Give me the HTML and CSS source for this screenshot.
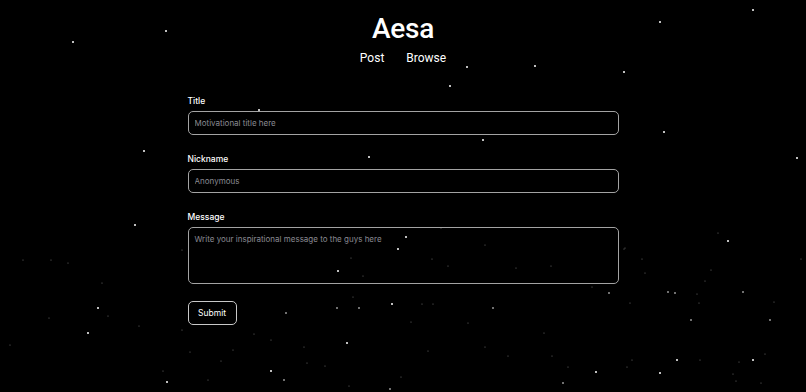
FILE: index.html
```html
<!DOCTYPE html>
<html lang="en">
<head>
    <meta charset="UTF-8" />
    <meta name="viewport" content="width=device-width, initial-scale=1.0" />
    <title>Aesa</title>
    <link rel="stylesheet" href="styles.css">
</head>
<body>
    <!-- Star field -->
    <svg class="stars" width="806" height="392" viewBox="0 0 806 392">
        <g class="bright">
            <circle cx="73" cy="42" r="1" />
            <circle cx="166" cy="31" r="1" />
            <circle cx="144" cy="151" r="1" />
            <circle cx="259" cy="110" r="1" />
            <circle cx="753" cy="10" r="1" />
            <circle cx="660" cy="22" r="1" />
            <circle cx="624" cy="72" r="1" />
            <circle cx="664" cy="132" r="1" />
            <circle cx="797" cy="158" r="1" />
            <circle cx="535" cy="66" r="1" />
            <circle cx="467" cy="67" r="1" />
            <circle cx="450" cy="86" r="1" />
            <circle cx="483" cy="140" r="1" />
            <circle cx="369" cy="157" r="1" />
            <circle cx="135" cy="225" r="1" />
            <circle cx="98" cy="308" r="1" />
            <circle cx="88" cy="333" r="1" />
            <circle cx="167" cy="382" r="1" />
            <circle cx="728" cy="241" r="1" />
            <circle cx="753" cy="360" r="1" />
            <circle cx="660" cy="373" r="1" />
            <circle cx="743" cy="292" r="0.8" />
            <circle cx="675" cy="293" r="0.8" />
            <circle cx="770" cy="320" r="0.8" />
            <circle cx="392" cy="304" r="1" />
            <circle cx="337" cy="308" r="0.8" />
            <circle cx="286" cy="313" r="0.8" />
            <circle cx="493" cy="308" r="0.8" />
            <circle cx="347" cy="343" r="1" />
            <circle cx="271" cy="371" r="1" />
            <circle cx="284" cy="380" r="0.8" />
            <circle cx="596" cy="372" r="1" />
            <circle cx="563" cy="383" r="0.8" />
            <circle cx="668" cy="292" r="0.8" />
            <circle cx="609" cy="293" r="0.8" />
            <circle cx="691" cy="320" r="0.8" />
            <circle cx="677" cy="360" r="1" />
            <circle cx="390" cy="389" r="0.8" />
            <circle cx="406" cy="237" r="1" />
            <circle cx="398" cy="249" r="1" />
            <circle cx="338" cy="271" r="1" />
            <circle cx="359" cy="308" r="0.8" />
        </g>
        <g class="dim">
            <circle cx="23" cy="260" r="0.6" />
            <circle cx="51" cy="260" r="0.6" />
            <circle cx="68" cy="263" r="0.6" />
            <circle cx="102" cy="283" r="0.6" />
            <circle cx="49" cy="318" r="0.6" />
            <circle cx="108" cy="316" r="0.6" />
            <circle cx="182" cy="250" r="0.6" />
            <circle cx="182" cy="330" r="0.6" />
            <circle cx="190" cy="352" r="0.6" />
            <circle cx="10" cy="345" r="0.6" />
            <circle cx="163" cy="371" r="0.6" />
            <circle cx="139" cy="326" r="0.6" />
            <circle cx="625" cy="248" r="0.6" />
            <circle cx="642" cy="259" r="0.6" />
            <circle cx="645" cy="273" r="0.6" />
            <circle cx="711" cy="270" r="0.6" />
            <circle cx="705" cy="281" r="0.6" />
            <circle cx="697" cy="294" r="0.6" />
            <circle cx="699" cy="303" r="0.6" />
            <circle cx="774" cy="302" r="0.6" />
            <circle cx="801" cy="259" r="0.6" />
            <circle cx="718" cy="233" r="0.6" />
            <circle cx="627" cy="367" r="0.6" />
            <circle cx="700" cy="360" r="0.6" />
            <circle cx="739" cy="362" r="0.6" />
            <circle cx="733" cy="374" r="0.6" />
            <circle cx="736" cy="381" r="0.6" />
            <circle cx="765" cy="354" r="0.6" />
            <circle cx="761" cy="383" r="0.6" />
            <circle cx="233" cy="350" r="0.6" />
            <circle cx="221" cy="361" r="0.6" />
            <circle cx="254" cy="334" r="0.6" />
            <circle cx="271" cy="340" r="0.6" />
            <circle cx="411" cy="322" r="0.6" />
            <circle cx="428" cy="351" r="0.6" />
            <circle cx="468" cy="323" r="0.6" />
            <circle cx="485" cy="347" r="0.6" />
            <circle cx="508" cy="356" r="0.6" />
            <circle cx="544" cy="333" r="0.6" />
            <circle cx="552" cy="356" r="0.6" />
            <circle cx="568" cy="367" r="0.6" />
            <circle cx="307" cy="363" r="0.6" />
            <circle cx="325" cy="366" r="0.6" />
            <circle cx="304" cy="347" r="0.6" />
            <circle cx="353" cy="297" r="0.6" />
            <circle cx="433" cy="304" r="0.6" />
            <circle cx="630" cy="303" r="0.6" />
            <circle cx="632" cy="360" r="0.6" />
            <circle cx="208" cy="380" r="0.6" />
            <circle cx="349" cy="386" r="0.6" />
            <circle cx="401" cy="377" r="0.6" />
            <circle cx="351" cy="258" r="0.6" />
            <circle cx="363" cy="276" r="0.6" />
            <circle cx="422" cy="304" r="0.6" />
            <circle cx="441" cy="228" r="0.6" />
            <circle cx="485" cy="245" r="0.6" />
            <circle cx="432" cy="259" r="0.6" />
            <circle cx="448" cy="266" r="0.6" />
            <circle cx="516" cy="268" r="0.6" />
            <circle cx="551" cy="266" r="0.6" />
            <circle cx="592" cy="287" r="0.6" />
            <circle cx="624" cy="249" r="0.6" />
        </g>
    </svg>

    <div class="page">
        <h1 class="brand">Aesa</h1>

        <nav class="nav">
            <a href="#">Post</a>
            <a href="#">Browse</a>
        </nav>

        <!-- Form post -->
        <form class="post-form">
            <div class="form-group">
                <label for="title">Title</label>
                <input type="text" id="title" class="form-control" placeholder="Motivational title here" />
            </div>

            <div class="form-group">
                <label for="nickname">Nickname</label>
                <input type="text" id="nickname" class="form-control" placeholder="Anonymous" />
            </div>

            <div class="form-group">
                <label for="message">Message</label>
                <textarea id="message" class="form-control message" placeholder="Write your inspirational message to the guys here"></textarea>
            </div>

            <button type="button" class="btn">Submit</button>
        </form>
    </div>
</body>
</html>
```

FILE: styles.css
```css
* {
    margin: 0;
    padding: 0;
    box-sizing: border-box;
}

body {
    background: #000;
    color: #fff;
    font-family: Inter, 'Noto Sans', sans-serif;
    min-height: 100vh;
    overflow: hidden;
    position: relative;
}

.stars {
    position: absolute;
    top: 0;
    left: 0;
    pointer-events: none;
}

.stars .bright {
    fill: #fff;
}

.stars .dim {
    fill: #6f6f6f;
}

.page {
    position: relative;
    padding-top: 10px;
    display: flex;
    flex-direction: column;
    align-items: center;
}

.brand {
    font-family: Roboto, Inter, sans-serif;
    font-size: 28px;
    line-height: 38px;
    font-weight: 500;
    letter-spacing: -0.3px;
}

.nav {
    display: flex;
    gap: 22px;
    margin-top: 2px;
}

.nav a {
    font-family: Roboto, Inter, sans-serif;
    color: #fff;
    text-decoration: none;
    font-size: 12px;
    line-height: 16px;
}

.post-form {
    width: 431px;
    margin-top: 28px;
    display: flex;
    flex-direction: column;
}

.form-group {
    display: flex;
    flex-direction: column;
    margin-bottom: 17px;
}

.form-group label {
    font-size: 8.5px;
    line-height: 14px;
    font-weight: 500;
    margin-bottom: 3px;
}

.form-control {
    width: 100%;
    height: 24px;
    padding: 0 6px;
    background: transparent;
    border: 1px solid #a3a3a3;
    border-radius: 5px;
    color: #fff;
    font-family: inherit;
    font-size: 8px;
    outline: none;
}

.form-control::placeholder {
    color: #8a8a92;
}

.form-control.message {
    height: 57px;
    padding: 6px;
    resize: none;
}

.btn {
    align-self: flex-start;
    width: 49px;
    height: 24px;
    background: transparent;
    border: 1px solid #c8c8c8;
    border-radius: 5px;
    color: #fff;
    font-family: inherit;
    font-size: 8.5px;
    cursor: pointer;
}
```
